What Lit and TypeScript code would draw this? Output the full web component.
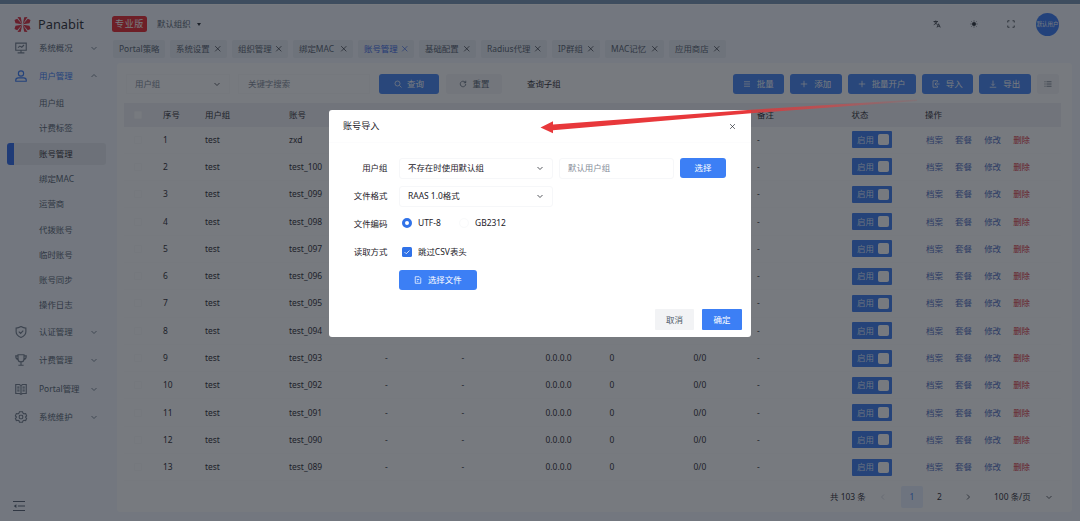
import { LitElement, html, css, svg, nothing } from "lit";
import { customElement, property } from "lit/decorators.js";

const ICONS: Record<string, unknown> = {
  down: svg`<path d="M3 6l5 5 5-5"/>`,
  up: svg`<path d="M3 10l5-5 5 5"/>`,
  left: svg`<path d="M10 3L5 8l5 5"/>`,
  right: svg`<path d="M6 3l5 5-5 5"/>`,
  close: svg`<path d="M2.500 2.500l11 11M13.500 2.500l-11 11"/>`,
  plus: svg`<path d="M8 1.500v13M1.500 8h13"/>`,
  search: svg`<circle cx="7" cy="7" r="5"/><path d="M11 11l4 4"/>`,
  refresh: svg`<path d="M13.500 8a5.500 5.500 0 1 1-1.600-3.900L13.500 5.500M13.500 1.500v4h-4"/>`,
  list: svg`<path d="M2 3.500h12M2 8h12M2 12.500h12"/>`,
  lines: svg`<path d="M5 3.500h10M5 8h10M5 12.500h10M1 3.500h2M1 8h2M1 12.500h2"/>`,
  import: svg`<path d="M11 4.500V1.500H2v13h9v-3M15 8H6M9 5L6 8l3 3"/>`,
  export: svg`<path d="M8 1v10M4.500 7.500L8 11l3.500-3.500M1.500 14.500h13"/>`,
  file: svg`<path d="M2.500 1.500h8l3 3v10h-11zM5.500 7h5M5.500 10.500h3"/>`,
  monitor: svg`<path d="M1 1.500h14v9.500H1zM8 11v3.500M3.500 14.500h9M4 7.500l2.500-2 2.500 1.500 3-3"/>`,
  user: svg`<circle cx="8" cy="4.700" r="3.500"/><path d="M1 15v-1.500q0-3 3.500-3h7q3.500 0 3.500 3V15z"/>`,
  shield: svg`<path d="M8 .8q3.500 2 6.500 2v5q0 5-6.500 7.500Q1.500 12.800 1.500 7.800v-5q3 0 6.500-2zM5 7.500l2.500 2.500L11 6.300"/>`,
  trophy: svg`<path d="M4 1h8v5.500a4 4 0 0 1-8 0zM4 2.500H1q0 4.500 3.500 5M12 2.500h3q0 4.500-3.500 5M8 10.500V15M4.500 15h7"/>`,
  book: svg`<path d="M1 2h5l2 1.500L10 2h5v12h-5l-2 1.200L6 14H1zM8 3.500V15M3 5.500h3M3 8h3M3 10.500h3M10 5.500h3M10 8h3M10 10.500h3"/>`,
  gear: svg`<path d="M6 1h4l.7 2 1.300.8 2.200-.4 1.300 3L14 8l1.500 1.700-1.300 3-2.200-.4-1.300.8L10 15H6l-.7-2-1.300-.7-2.200.4-1.300-3L2 8 .5 6.400l1.300-3 2.200.4L5.300 3z"/><rect x="5.700" y="5.700" width="4.600" height="4.600" rx="1.200"/>`,
  fold: svg`<path d="M0 2h16M6.500 8H16M0 14h16"/><path d="M1 8l3.500-2.500v5z" fill="currentColor" stroke="none"/>`,
  lang: svg`<path d="M1 3h9M5.500 1v2M3 3q1.500 4.500 6 6M8.500 3Q7 7.500 1.500 9.500M8 15l3-7.500 3.500 7.500M9 12.500h4.500"/>`,
  sun: svg`<circle cx="8" cy="8" r="3.200" fill="currentColor"/><path d="M8 1v2M8 13v2M1 8h2M13 8h2M3 3l1.500 1.500M11.500 11.500L13 13M13 3l-1.500 1.500M4.500 11.500L3 13"/>`,
  full: svg`<path d="M1.500 5V1.500H5M11 1.500h3.500V5M14.500 11v3.500H11M5 14.500H1.500V11"/>`,
  check: svg`<path d="M3 8l3.500 3.500L13 5"/>`,
};

@customElement("ui-icon")
export class UiIcon extends LitElement {
  @property() name = "";
  static styles = css`
    :host { display: inline-flex; width: 8px; height: 8px; flex: none; }
    svg { width: 100%; height: 100%; overflow: visible; }
  `;
  render() {
    return html`<svg viewBox="0 0 16 16" fill="none" stroke="currentColor" stroke-width="1.500">${ICONS[this.name]}</svg>`;
  }
}

const USER_MENU = ["用户组", "计费标签", "账号管理", "绑定MAC", "运营商", "代拨账号", "临时账号", "账号同步", "操作日志"];
const MENU = [
  { icon: "monitor", label: "系统概况" },
  { icon: "user", label: "用户管理", children: USER_MENU },
  { icon: "shield", label: "认证管理" },
  { icon: "trophy", label: "计费管理" },
  { icon: "book", label: "Portal管理" },
  { icon: "gear", label: "系统维护" },
];
const TABS = ["Portal策略", "系统设置", "组织管理", "绑定MAC", "账号管理", "基础配置", "Radius代理", "IP群组", "MAC记忆", "应用商店"];
const ACCOUNTS = ["zxd", ...Array.from({ length: 12 }, (_, i) => "test_" + String(100 - i).padStart(3, "0"))];
const DETAILS = ["-", "-", "0.0.0.0", "0", "0/0"];
const FIRST_WITH_DETAILS = 8;

@customElement("app-root")
export class AppRoot extends LitElement {
  static styles = css`
    :host {
      display: block; position: relative; width: 1080px; height: 521px; overflow: hidden;
      font-family: "Noto Sans", "Noto Sans CJK SC", sans-serif; font-size: 8.450px; line-height: 12px;
      color: #1d2129; white-space: nowrap;
    }
    * { box-sizing: border-box; }
    .page { display: flex; flex-direction: column; width: 100%; height: 100%; background: #f4f8ff; }
    .strip { height: 4px; flex: none; background: #7090b0; }
    .strip.edge { height: 1px; background: #fff; }
    .header { display: flex; align-items: center; height: 29px; flex: none; padding: 9px 21px 0 14px; }
    .logo { width: 17px; height: 17px; }
    .brand { margin-left: 7px; width: 74px; font-size: 12.800px; line-height: 18px; }
    .edition { width: 35px; height: 16px; border-radius: 2.500px; background: #e81d25; color: #fff; text-align: center; line-height: 16px; font-size: 9px; letter-spacing: 0.700px; margin-top: -1px; }
    .org { display: flex; align-items: center; gap: 6px; margin-left: 10px; color: #4e5969; }
    .caret { border: 2.500px solid transparent; border-top: 3.500px solid #1d2129; border-bottom: 0; }
    .tools { margin-left: auto; display: flex; align-items: center; }
    .tools ui-icon { margin-right: 29px; }
    .tools ui-icon.last { margin-right: 21px; }
    .avatar { width: 23px; height: 23px; border-radius: 50%; background: #2f73f6; color: #fff; display: flex; align-items: center; justify-content: center; font-size: 5.400px; }
    .body { display: flex; flex: 1; min-height: 0; }
    .side { width: 113px; flex: none; display: flex; flex-direction: column; padding-left: 7px; color: #4e5969; }
    .item { display: flex; align-items: center; height: 28.200px; flex: none; padding: 0 11px 0 8px; }
    .item ui-icon.lead { width: 12px; height: 12px; margin-right: 12px; color: #6b7585; }
    .item ui-icon.arrow { width: 8px; height: 8px; margin-left: auto; margin-right: 4px; color: #4e5969; }
    .item.open, .item.open ui-icon.lead { color: #2f73f6; }
    .sub { height: 25.300px; display: flex; align-items: center; flex: none; }
    .sub span { display: flex; align-items: center; height: 22px; width: 99px; padding-left: 32px; }
    .sub.on span { background: #e6e9f0; border-left: 7px solid #2563eb; padding-left: 25px; border-radius: 3px; color: #1d2129; }
    .fold { margin: auto 0 9px 6px; width: 12px; height: 12px; }
    .main { display: flex; flex-direction: column; flex: 1; min-width: 0; }
    .tabs { display: grid; grid-template-columns: 57px 62px 61px 65px 61px 62px 71px 53px 64px 62px; padding-top: 6px; height: 29px; flex: none; }
    .tab { display: flex; align-items: center; justify-content: space-between; height: 18px; margin-right: 5px; padding: 0 5.500px 0 6px; background: #e9edf4; border-radius: 2px; color: #4e5969; }
    .tab ui-icon { width: 7.500px; height: 7.500px; color: #1d2129; }
    .tab.on, .tab.on ui-icon { color: #2f60e8; }
    .card { display: flex; flex-direction: column; background: #fff; margin: 0 8px 9px 4px; flex: 1; min-height: 0; border-radius: 3px; }
    .bar { display: flex; align-items: center; height: 20px; margin-top: 11px; padding: 0 12px 0 9px; flex: none; }
    .pick { display: flex; align-items: center; justify-content: space-between; width: 104px; height: 20px; padding: 0 8px; color: #7c8594; border: 1px solid #fafafb; }
    .pick ui-icon { color: #1d2129; }
    .query { width: 132px; height: 20px; margin-left: 8px; padding: 3px 9px; color: #7c8594; border: 1px solid #fafafb; }
    .btn { display: flex; align-items: center; justify-content: center; gap: 6px; height: 20.500px; border-radius: 3px; background: #3c7ff5; color: #fff; flex: none; }
    .plain { background: #f4f5f7; color: #4e5969; }
    .q1 { width: 60px; margin-left: 9px; gap: 5px; }
    .q2 { width: 56px; margin-left: 7px; }
    .scope { margin-left: 25px; }
    .acts { display: flex; margin-left: auto; margin-right: 1.500px; gap: 6px; }
    .s { width: 51.500px; }
    .l { width: 68px; }
    .m { width: 22px; }
    .row { display: grid; grid-template-columns: 39px 42px 84px 96px 76.500px 84px 64px 84px 63.500px 94.500px 73.500px 1fr; align-items: center; height: 27.300px; margin-left: 7px; margin-right: 11px; border-bottom: 1px solid #fcfcfd; flex: none; }
    .row.head { height: 23.500px; margin-top: 9px; background: #f0f1f4; border: 0; }
    .box { width: 8px; height: 8px; border: 1px solid #f9fafb; border-radius: 1px; margin-left: 10px; background: #fff; }
    .switch { display: flex; align-items: center; justify-content: space-between; width: 40.500px; height: 17px; padding: 0 3px 0 5.500px; background: #3475ef; color: #dbe7ff; border-radius: 1px; }
    .switch i { width: 11px; height: 11px; border-radius: 2px; background: #fff; }
    .links { display: flex; gap: 12.200px; color: #3f63bd; padding-left: 1px; }
    .del { color: #d8232f; }
    .pager { display: grid; grid-template-columns: 49px 22px 22px 14px 22px 4.500px 30.500px 51px 8px; align-items: center; margin: 4.500px 19px 0 auto; height: 22px; }
    .cur { display: flex; align-items: center; justify-content: center; height: 22px; background: #e8f1ff; color: #3c7ff5; border-radius: 2px; }
    .faint { color: #c9cdd4; }
    .mask { position: absolute; inset: 0; display: flex; justify-content: center; align-items: flex-start; padding-top: 110px; background: rgba(29, 33, 41, 0.6); }
    .dialog { width: 422px; height: 227px; background: #fff; border-radius: 3px; display: flex; flex-direction: column; }
    .title { display: flex; align-items: center; justify-content: space-between; height: 33px; padding: 0 15px 0 14px; border-bottom: 1px solid #fcfcfd; font-size: 9.100px; }
    .title ui-icon { width: 7px; height: 7px; }
    .form { display: grid; grid-template-columns: 58.500px 1fr; column-gap: 11.500px; grid-template-rows: 28px 28px 28px 28px 28px; padding-top: 11px; align-items: center; flex: 1; align-content: start; }
    .form .label { text-align: right; }
    .field { display: flex; align-items: center; }
    .select { display: flex; align-items: center; justify-content: space-between; width: 154px; height: 21px; border: 1px solid #f6f7f9; border-radius: 3px; padding: 0 8px; }
    .input { width: 115px; height: 21px; border: 1px solid #f6f7f9; border-radius: 3px; margin-left: 6px; padding: 3.500px 8px; color: #868d99; }
    .choose { width: 46px; margin-left: 6px; }
    .radio { width: 10px; height: 10px; border-radius: 50%; border: 1px solid #f9fafb; margin-right: 6px; }
    .radio.on { border: 3px solid #3072e8; }
    .check { display: flex; align-items: center; justify-content: center; width: 10px; height: 10px; border-radius: 1.500px; background: #3072e8; color: #fff; margin-right: 6px; }
    .opts { padding-left: 3px; height: 12px; }
    .opts.up { margin-top: -2px; }
    .utf { width: 41px; }
    .upload { width: 77.500px; }
    .foot { display: flex; justify-content: flex-end; gap: 8px; padding: 0 9px 7px; }
    .foot .btn { border-radius: 1px; height: 21px; }
    .no { width: 39px; background: #f2f3f5; color: #4e5969; }
    .yes { width: 40px; }
    .pointer { position: absolute; inset: 0; width: 1080px; height: 521px; pointer-events: none; }
  `;

  private btn(cls: string, icon: string, label: string) {
    return html`<div class="btn ${cls}"><ui-icon name=${icon}></ui-icon>${label ? html`<span>${label}</span>` : nothing}</div>`;
  }

  private menu() {
    return MENU.map((m) => html`
      <div class="item ${m.children ? "open" : ""}">
        <ui-icon class="lead" name=${m.icon}></ui-icon><span>${m.label}</span>
        <ui-icon class="arrow" name=${m.children ? "up" : "down"}></ui-icon>
      </div>
      ${(m.children ?? []).map((c) => html`<div class="sub ${c === "账号管理" ? "on" : ""}"><span>${c}</span></div>`)}
    `);
  }

  private row(name: string, i: number) {
    return html`<div class="row">
      <i class="box"></i><span>${i + 1}</span><span>test</span><span>${name}</span>
      ${DETAILS.map((d) => html`<span>${i >= FIRST_WITH_DETAILS ? d : nothing}</span>`)}<span>-</span>
      <div class="switch"><span>启用</span><i></i></div>
      <div class="links"><span>档案</span><span>套餐</span><span>修改</span><span class="del">删除</span></div>
    </div>`;
  }

  render() {
    return html`
      <div class="page">
        <div class="strip"></div><div class="strip edge"></div>
        <div class="header">
          <svg class="logo" viewBox="0 0 17 17" fill="#d91e32">
            <path d="M3.500 1L6.800 1.300 8.200 8.200zM13.500 1L10.200 1.300 8.800 8.200zM3.500 16L6.800 15.700 8.200 8.800zM13.500 16L10.200 15.700 8.800 8.800z"/>
            <path d="M.5 4L3.200 2.800 8 8.200 1.500 7.200zM16.500 4L13.800 2.800 9 8.200 15.500 7.200zM.5 13L3.200 14.200 8 8.800 1.500 9.800zM16.500 13L13.800 14.200 9 8.800 15.500 9.800z"/>
          </svg>
          <div class="brand">Panabit</div>
          <div class="edition">专业版</div>
          <div class="org"><span>默认组织</span><i class="caret"></i></div>
          <div class="tools">
            <ui-icon name="lang"></ui-icon><ui-icon name="sun"></ui-icon><ui-icon class="last" name="full"></ui-icon>
            <div class="avatar">默认用户</div>
          </div>
        </div>
        <div class="body">
          <div class="side">${this.menu()}<ui-icon class="fold" name="fold"></ui-icon></div>
          <div class="main">
            <div class="tabs">
              ${TABS.map((t, i) => html`<div class="tab ${i === 4 ? "on" : ""}"><span>${t}</span>${i ? html`<ui-icon name="close"></ui-icon>` : nothing}</div>`)}
            </div>
            <div class="card">
              <div class="bar">
                <div class="pick"><span>用户组</span><ui-icon name="down"></ui-icon></div>
                <div class="query">关键字搜索</div>
                ${this.btn("q1", "search", "查询")}${this.btn("q2 plain", "refresh", "重置")}
                <span class="scope">查询子组</span>
                <div class="acts">
                  ${this.btn("s", "list", "批量")}${this.btn("s", "plus", "添加")}${this.btn("l", "plus", "批量开户")}
                  ${this.btn("s", "import", "导入")}${this.btn("s", "export", "导出")}${this.btn("m plain", "lines", "")}
                </div>
              </div>
              <div class="row head">
                <i class="box"></i><span>序号</span><span>用户组</span><span>账号</span>
                <span></span><span></span><span></span><span></span><span></span><span>备注</span><span>状态</span><span>操作</span>
              </div>
              ${ACCOUNTS.map((a, i) => this.row(a, i))}
              <div class="pager">
                <span>共 103 条</span><ui-icon class="faint" name="left"></ui-icon><span class="cur">1</span><i></i>
                <span>2</span><i></i><ui-icon name="right"></ui-icon><span>100 条/页</span><ui-icon name="down"></ui-icon>
              </div>
            </div>
          </div>
        </div>
      </div>
      <div class="mask">
        <div class="dialog">
          <div class="title"><span>账号导入</span><ui-icon name="close"></ui-icon></div>
          <div class="form">
            <span class="label">用户组</span>
            <div class="field">
              <div class="select"><span>不存在时使用默认组</span><ui-icon name="down"></ui-icon></div>
              <div class="input">默认用户组</div>
              <div class="btn choose">选择</div>
            </div>
            <span class="label">文件格式</span>
            <div class="field"><div class="select"><span>RAAS 1.0格式</span><ui-icon name="down"></ui-icon></div></div>
            <span class="label">文件编码</span>
            <div class="field opts up"><i class="radio on"></i><span class="utf">UTF-8</span><i class="radio"></i><span>GB2312</span></div>
            <span class="label">读取方式</span>
            <div class="field opts"><i class="check"><ui-icon name="check"></ui-icon></i><span>跳过CSV表头</span></div>
            <span></span>
            ${this.btn("upload", "file", "选择文件")}
          </div>
          <div class="foot"><div class="btn no">取消</div><div class="btn yes">确定</div></div>
        </div>
      </div>
      <svg class="pointer" viewBox="0 0 1080 521">
        <defs><linearGradient id="fade" gradientUnits="userSpaceOnUse" x1="751" y1="0" x2="917" y2="0">
          <stop offset="0" stop-color="#cc3f42"/><stop offset="0.500" stop-color="#b45457"/><stop offset="1" stop-color="#8a6a6e" stop-opacity="0.500"/>
        </linearGradient></defs>
        <path d="M751 109.800L917 99.500V101L751 113.300z" fill="url(#fade)"/>
        <path d="M540.500 127.500L553 121.200V124.500L751 109.800V113.300L553 130.300V133.200z" fill="#e8383b"/>
      </svg>
    `;
  }
}
